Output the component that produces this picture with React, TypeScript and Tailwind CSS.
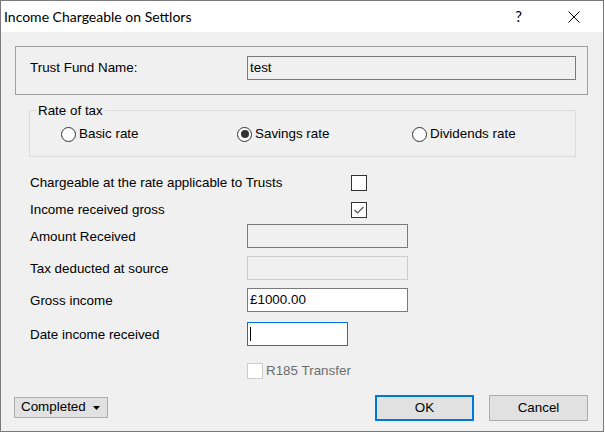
import React from 'react';

const font = { fontFamily: '"Liberation Sans", Arial, sans-serif' };
const titleFont = { fontFamily: 'Lato, "Noto Sans", sans-serif' };

const Radio = ({ checked, label }: { checked?: boolean; label: string }) => (
  <div className="flex items-center gap-[3px]">
    <span className="flex h-[15px] w-[15px] items-center justify-center rounded-full border border-[#333333] bg-white">
      {checked && <span className="h-[8px] w-[8px] rounded-full bg-[#333333]" />}
    </span>
    <span>{label}</span>
  </div>
);

const CheckBox = ({ checked, disabled }: { checked?: boolean; disabled?: boolean }) => (
  <span
    className={`flex h-[16px] w-[16px] items-center justify-center border bg-white ${
      disabled ? 'border-[#cccccc]' : 'border-[#333333]'
    }`}
  >
    {checked && (
      <svg width="12" height="12" viewBox="0 0 12 12">
        <polyline points="1.5,6 4.5,9 10.5,3" fill="none" stroke="#555555" strokeWidth="1.2" />
      </svg>
    )}
  </span>
);

const FieldRow = ({ label, children, mt }: { label: string; children: React.ReactNode; mt: string }) => (
  <div className={`flex h-[24px] items-center pl-[29px] ${mt}`}>
    <span className="w-[217px] pt-[2px]">{label}</span>
    {children}
  </div>
);

export default function App() {
  return (
    <div
      className="flex h-[432px] w-[604px] flex-col border border-[#7a7a7a] bg-[#f0f0f0] text-[13.4px] text-black"
      style={font}
    >
      {/* Title bar */}
      <div className="flex h-[31px] shrink-0 items-center bg-white">
        <span className="pl-[3px] text-[14px]" style={titleFont}>
          Income Chargeable on Settlors
        </span>
        <span className="ml-auto mr-[46px] text-[15px]" style={titleFont}>
          ?
        </span>
        <svg className="mr-[23px]" width="12" height="12" viewBox="0 0 12 12">
          <path d="M0.5 0.5 L11.5 11.5 M11.5 0.5 L0.5 11.5" stroke="#000" strokeWidth="1" />
        </svg>
      </div>

      {/* Trust fund group */}
      <div className="ml-[14px] mt-[14px] h-[49px] w-[573px] border border-[#a0a0a0] pt-[9px]">
        <div className="flex items-center pl-[14px]">
          <span className="w-[217px]">Trust Fund Name:</span>
          <div className="flex h-[24px] w-[329px] items-center border border-[#7a7a7a] bg-[#f0f0f0] pl-[2px]">
            test
          </div>
        </div>
      </div>

      {/* Rate of tax */}
      <div className="relative ml-[28px] mt-[15px] h-[47px] w-[547px] border border-[#dcdcdc]">
        <span className="absolute -top-[10px] left-[6px] bg-[#f0f0f0] px-[2px]">Rate of tax</span>
        <div className="flex items-center pl-[31px] pt-[13px]">
          <div className="w-[176px]">
            <Radio label="Basic rate" />
          </div>
          <div className="w-[175px]">
            <Radio checked label="Savings rate" />
          </div>
          <Radio label="Dividends rate" />
        </div>
      </div>

      {/* Checkbox rows */}
      <div className="mt-[18px] flex h-[16px] items-center pl-[29px]">
        <span className="w-[321px]">Chargeable at the rate applicable to Trusts</span>
        <CheckBox />
      </div>
      <div className="mt-[11px] flex h-[16px] items-center pl-[29px]">
        <span className="w-[321px]">Income received gross</span>
        <CheckBox checked />
      </div>

      <FieldRow label="Amount Received" mt="mt-[6px]">
        <div className="h-[24px] w-[161px] border border-[#7a7a7a] bg-[#f0f0f0]" />
      </FieldRow>
      <FieldRow label="Tax deducted at source" mt="mt-[8px]">
        <div className="h-[24px] w-[161px] border border-[#cccccc] bg-[#f0f0f0]" />
      </FieldRow>
      <FieldRow label="Gross income" mt="mt-[8px]">
        <div className="flex h-[24px] w-[161px] items-center border border-[#7a7a7a] bg-white pl-[2px]">
          £1000.00
        </div>
      </FieldRow>
      <FieldRow label="Date income received" mt="mt-[10px]">
        <div className="flex h-[24px] w-[101px] items-center border border-[#0078d7] bg-white pl-[2px]">
          <span className="h-[14px] w-px bg-black" />
        </div>
      </FieldRow>

      <div className="mt-[17px] flex h-[16px] items-center pl-[246px] text-[#6d6d6d]">
        <CheckBox disabled />
        <span className="ml-[3px]">R185 Transfer</span>
      </div>

      {/* Footer */}
      <div className="mt-[16px] flex items-start pl-[13px]">
        <div className="mt-[2px] flex h-[21px] w-[94px] items-center border border-[#adadad] bg-[#e1e1e1] pl-[6px]">
          <span>Completed</span>
          <svg className="ml-[7px]" width="7" height="4" viewBox="0 0 7 4">
            <polygon points="0,0 7,0 3.5,4" fill="#000" />
          </svg>
        </div>
        <div className="ml-auto flex h-[26px] w-[99px] items-center justify-center border-2 border-[#0078d7] bg-[#e1e1e1]">
          OK
        </div>
        <div className="ml-[15px] mr-[15px] flex h-[26px] w-[99px] items-center justify-center border border-[#adadad] bg-[#e1e1e1]">
          Cancel
        </div>
      </div>
    </div>
  );
}
